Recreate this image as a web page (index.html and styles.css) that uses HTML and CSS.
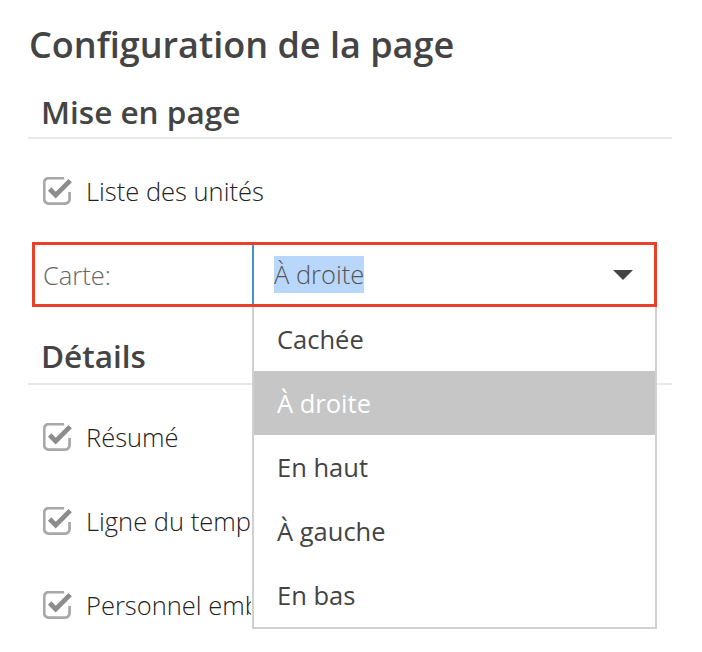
FILE: index.html
```html
<!DOCTYPE html>
<html lang="fr">
<head>
<meta charset="utf-8">
<title>Configuration de la page</title>
<link rel="stylesheet" href="styles.css">
</head>
<body>
<div class="page">
  <h1 class="title">Configuration de la page</h1>

  <h2 class="section">Mise en page</h2>
  <div class="check-row">
    <svg class="check" viewBox="2.5 2.5 24 24" width="29" height="29"><path d="M20 3.5H7a3.5 3.5 0 0 0-3.5 3.5v14a3.5 3.5 0 0 0 3.5 3.5h14a3.5 3.5 0 0 0 3.5-3.5v-6" fill="none" stroke="#a8a8a8" stroke-width="2.3"/><path d="M8 12.5l5 5L25 5.5" fill="none" stroke="#8c8c8c" stroke-width="4" stroke-linejoin="miter"/></svg>
    <span class="check-label">Liste des unités</span>
  </div>

  <div class="select-row">
    <label class="select-label">Carte:</label>
    <div class="select">
      <span class="select-value"><span class="selected-text">À droite</span></span>
      <span class="caret"></span>
      <ul class="dropdown">
        <li class="option">Cachée</li>
        <li class="option active">À droite</li>
        <li class="option">En haut</li>
        <li class="option">À gauche</li>
        <li class="option">En bas</li>
      </ul>
    </div>
  </div>

  <h2 class="section section-2">Détails</h2>
  <div class="check-row">
    <svg class="check" viewBox="2.5 2.5 24 24" width="29" height="29"><path d="M20 3.5H7a3.5 3.5 0 0 0-3.5 3.5v14a3.5 3.5 0 0 0 3.5 3.5h14a3.5 3.5 0 0 0 3.5-3.5v-6" fill="none" stroke="#a8a8a8" stroke-width="2.3"/><path d="M8 12.5l5 5L25 5.5" fill="none" stroke="#8c8c8c" stroke-width="4" stroke-linejoin="miter"/></svg>
    <span class="check-label">Résumé</span>
  </div>
  <div class="check-row">
    <svg class="check" viewBox="2.5 2.5 24 24" width="29" height="29"><path d="M20 3.5H7a3.5 3.5 0 0 0-3.5 3.5v14a3.5 3.5 0 0 0 3.5 3.5h14a3.5 3.5 0 0 0 3.5-3.5v-6" fill="none" stroke="#a8a8a8" stroke-width="2.3"/><path d="M8 12.5l5 5L25 5.5" fill="none" stroke="#8c8c8c" stroke-width="4" stroke-linejoin="miter"/></svg>
    <span class="check-label clipped">Ligne du temps</span>
  </div>
  <div class="check-row">
    <svg class="check" viewBox="2.5 2.5 24 24" width="29" height="29"><path d="M20 3.5H7a3.5 3.5 0 0 0-3.5 3.5v14a3.5 3.5 0 0 0 3.5 3.5h14a3.5 3.5 0 0 0 3.5-3.5v-6" fill="none" stroke="#a8a8a8" stroke-width="2.3"/><path d="M8 12.5l5 5L25 5.5" fill="none" stroke="#8c8c8c" stroke-width="4" stroke-linejoin="miter"/></svg>
    <span class="check-label clipped">Personnel embarqué</span>
  </div>
</div>
</body>
</html>
```

FILE: styles.css
```css
html, body {
  margin: 0;
  padding: 0;
  background: #ffffff;
  overflow: hidden;
}

body {
  width: 702px;
  height: 652px;
  font-family: "Open Sans", "Liberation Sans", sans-serif;
  color: #333;
}

.page {
  padding: 22px 30px 0 28px;
}

.title {
  margin: 0;
  padding-left: 1px;
  font-size: 36px;
  line-height: 46px;
  font-weight: 600;
  color: #444;
}

.section {
  margin: 26px 0 0 0;
  padding: 0 0 7px 13px;
  font-size: 31.5px;
  line-height: 36px;
  font-weight: 600;
  color: #444;
  border-bottom: 2px solid #e8e8e8;
}

.section-2 {
  margin-top: 31px;
  padding-bottom: 9px;
}

.check-row {
  display: flex;
  align-items: center;
  gap: 14px;
  height: 64px;
  margin-top: 20px;
  padding-left: 15px;
  font-size: 25.5px;
  font-weight: 300;
  color: #222;
  white-space: nowrap;
}

.check {
  flex: none;
  display: block;
}

.check-label.clipped {
  max-width: 165px;
  overflow: hidden;
}

.select-row {
  display: flex;
  align-items: stretch;
  height: 59px;
  margin: 19px 15px 0 4px;
  border: 3px solid #e8402a;
  position: relative;
  z-index: 2;
}

.select-label {
  flex: none;
  width: 209px;
  padding-left: 8px;
  display: flex;
  align-items: center;
  font-size: 25.5px;
  font-weight: 300;
  color: #666;
}

.select {
  flex: 1;
  position: relative;
  display: flex;
  align-items: center;
  justify-content: space-between;
  border-left: 2px solid #4a8fd6;
  padding: 0 21px 0 20px;
  background: #fff;
}

.select-value {
  font-size: 25.5px;
  font-weight: 300;
  color: #555;
  line-height: 35px;
}

.selected-text {
  background: #b9d6fb;
  padding: 1px 0 2px;
}

.caret {
  width: 0;
  height: 0;
  border-left: 10px solid transparent;
  border-right: 10px solid transparent;
  border-top: 10px solid #444;
}

.dropdown {
  position: absolute;
  top: calc(100% + 3px);
  left: -2px;
  width: 405px;
  box-sizing: border-box;
  margin: 0;
  padding: 0;
  list-style: none;
  background: #fff;
  border: 2px solid #d0d0d0;
  border-top: none;
}

.option {
  height: 64px;
  display: flex;
  align-items: center;
  padding-left: 23px;
  font-size: 25.5px;
  font-weight: 400;
  color: #444;
}

.option.active {
  background: #c6c6c6;
  color: #fff;
}
```
